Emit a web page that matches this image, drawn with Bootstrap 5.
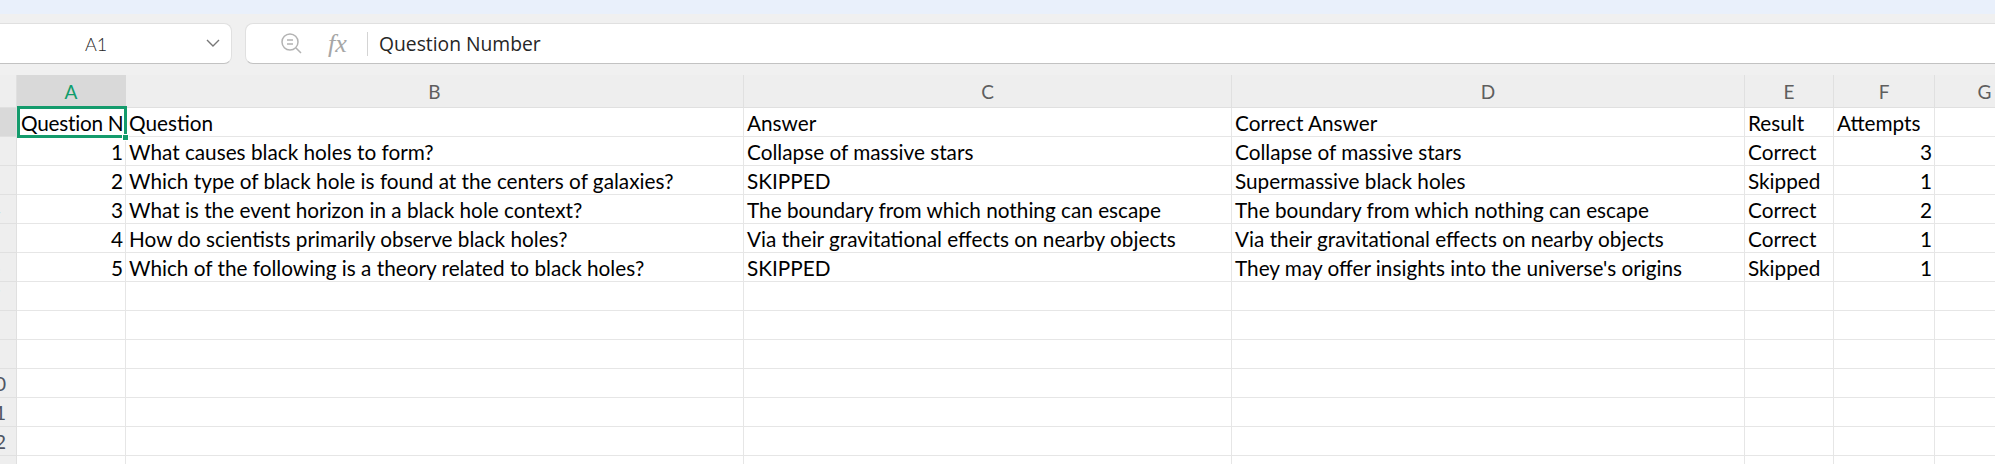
<!DOCTYPE html>
<html lang="en">
<head>
    <meta charset="UTF-8">
    <title>Quiz results</title>
    <link href="https://cdn.jsdelivr.net/npm/bootstrap@5.3.3/dist/css/bootstrap.min.css" rel="stylesheet">
    <style>
        body {
            height: 464px;
            overflow: hidden;
            background: #f0f0f0;
        }
        .top-band {
            height: 14px;
            background: #e9f0fb;
        }
        .formula-row {
            height: 41px;
            margin: 9px 0 11px -20px;
        }
        .box-name, .box-formula {
            background: #fff;
            border: 1px solid #e0e0e0;
            border-bottom-color: #c2c2c2;
            border-radius: 8px;
        }
        .box-name {
            width: 252px;
            padding: 0 11px 0 0;
            font: 300 18px Lato, sans-serif;
            color: #1f1f1f;
        }
        .box-name span { margin-left: 104px; }
        .box-formula {
            margin-left: 13px;
            margin-right: -20px;
            padding-left: 34px;
            font: 19.3px "Open Sans", sans-serif;
            color: #262626;
        }
        .fx-mark {
            width: 26px;
            margin-left: 24px;
            margin-right: 13px;
            font: italic 26px "Liberation Serif", serif;
            color: #a6a6a6;
        }
        .fx-sep {
            width: 1px;
            height: 24px;
            background: #d4d4d4;
            margin-right: 11px;
        }
        .sheet-wrap {
            height: 389px;
            overflow: hidden;
        }
        .sheet {
            table-layout: fixed;
            width: 2030px;
            margin-left: -27px;
            border-collapse: separate;
            border-spacing: 0;
            font: 20.75px Lato, sans-serif;
            color: #000;
        }
        .sheet th {
            height: 33px;
            padding: 0;
            font: 19px Lato, sans-serif;
            color: #5e5e5e;
            text-align: center;
            background: #eeeeee;
            border-right: 1px solid #e0e0e0;
            border-bottom: 1px solid #e0e0e0;
        }
        .sheet th.col-on {
            background: #d9d9d9;
            color: #0f9d6b;
            border-right-color: #d9d9d9;
        }
        .sheet td {
            height: 29px;
            padding: 1px 2px 0 3px;
            line-height: 26px;
            background: #fff;
            border-right: 1px solid #e6e6e6;
            border-bottom: 1px solid #e6e6e6;
            white-space: nowrap;
            overflow: hidden;
        }
        .sheet td.num { text-align: right; }
        .sheet td.row-head {
            padding: 0;
            background: #eeeeee;
            border-right-color: #e0e0e0;
            border-bottom-color: #e0e0e0;
            text-align: center;
            font: 20px Lato, sans-serif;
            color: #4f5563;
        }
        .sheet td.row-head.row-on { background: #d9d9d9; }
        .sheet td.cell-on {
            position: relative;
            overflow: visible;
            padding-left: 4px;
        }
        .cell-clip {
            display: block;
            overflow: hidden;
            letter-spacing: -0.25px;
        }
        .sel-box {
            position: absolute;
            inset: -2px -2px -2px 0;
            border: 3px solid #149b6c;
            pointer-events: none;
        }
        .sel-handle {
            position: absolute;
            right: -4px;
            bottom: -5px;
            width: 5px;
            height: 5px;
            background: #149b6c;
            border: 1px solid #fff;
            box-sizing: content-box;
        }
    </style>
</head>
<body>
    <div class="top-band"></div>

    <div class="formula-row d-flex">
        <div class="box-name d-flex align-items-center justify-content-between">
            <span>A1</span>
            <svg width="14" height="9" viewBox="0 0 14 9" fill="none" stroke="#777" stroke-width="1.4"><path d="M1 1l6 6 6-6"/></svg>
        </div>
        <div class="box-formula flex-grow-1 d-flex align-items-center">
            <svg width="24" height="24" viewBox="0 0 24 24" fill="none" stroke="#b3b3b3" stroke-width="1.5"><circle cx="10" cy="10" r="8"/><path d="M7 8h6M7 12h6M16 16l5 5"/></svg>
            <span class="fx-mark">fx</span>
            <span class="fx-sep"></span>
            <span>Question Number</span>
        </div>
    </div>

    <div class="sheet-wrap">
        <table class="sheet">
            <colgroup>
                <col style="width:44px"><col style="width:109px"><col style="width:618px"><col style="width:488px"><col style="width:513px"><col style="width:89px"><col style="width:101px"><col style="width:100px">
            </colgroup>
            <thead>
                <tr><th></th><th class="col-on">A</th><th>B</th><th>C</th><th>D</th><th>E</th><th>F</th><th>G</th></tr>
            </thead>
            <tbody id="rows"></tbody>
        </table>
    </div>

    <script>
        const data = [
            ["Question Number", "Question", "Answer", "Correct Answer", "Result", "Attempts"],
            [1, "What causes black holes to form?", "Collapse of massive stars", "Collapse of massive stars", "Correct", 3],
            [2, "Which type of black hole is found at the centers of galaxies?", "SKIPPED", "Supermassive black holes", "Skipped", 1],
            [3, "What is the event horizon in a black hole context?", "The boundary from which nothing can escape", "The boundary from which nothing can escape", "Correct", 2],
            [4, "How do scientists primarily observe black holes?", "Via their gravitational effects on nearby objects", "Via their gravitational effects on nearby objects", "Correct", 1],
            [5, "Which of the following is a theory related to black holes?", "SKIPPED", "They may offer insights into the universe's origins", "Skipped", 1]
        ];

        let html = "";
        for (let r = 0; r < 13; r++) {
            const row = data[r] || ["", "", "", "", "", ""];
            html += `<tr><td class="row-head${r === 0 ? " row-on" : ""}">${r + 1}</td>`;
            row.forEach((val, c) => {
                if (r === 0 && c === 0) {
                    html += `<td class="cell-on"><span class="cell-clip">${val}</span><span class="sel-box"></span><span class="sel-handle"></span></td>`;
                } else {
                    html += `<td${typeof val === "number" ? ' class="num"' : ""}>${val}</td>`;
                }
            });
            html += "<td></td></tr>";
        }
        document.getElementById("rows").innerHTML = html;
    </script>
    <script src="https://cdn.jsdelivr.net/npm/bootstrap@5.3.3/dist/js/bootstrap.bundle.min.js"></script>
</body>
</html>
